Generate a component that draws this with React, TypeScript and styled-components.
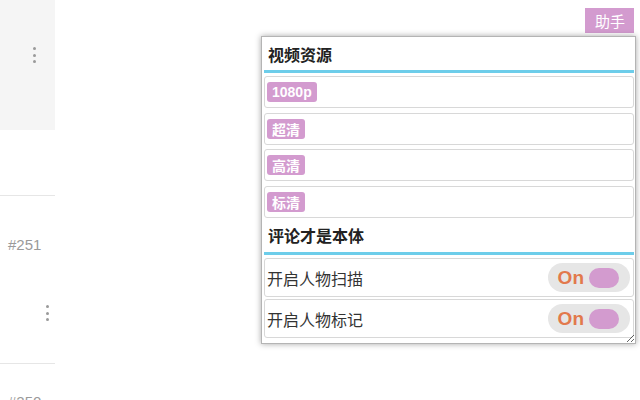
import React from 'react';
import styled, { createGlobalStyle } from 'styled-components';

const GlobalStyle = createGlobalStyle`
  html, body {
    margin: 0;
    padding: 0;
    background: #fff;
    overflow: hidden;
  }
  body {
    font-family: "Liberation Sans", "Noto Sans CJK SC", sans-serif;
  }
`;

const Page = styled.div`
  position: relative;
  width: 640px;
  height: 400px;
  overflow: hidden;
`;

/* left feed column, mostly hidden behind the page edge */
const FeedColumn = styled.div`
  width: 55px;
  display: flex;
  flex-direction: column;
`;

const FeedCard = styled.div<{ $gray?: boolean; $height: number }>`
  height: ${({ $height }) => $height}px;
  background: ${({ $gray }) => ($gray ? '#f5f5f5' : 'transparent')};
  box-sizing: border-box;
`;

const Divider = styled.div`
  height: 1px;
  background: #e6e6e6;
`;

const FloorNo = styled.div<{ $top: number }>`
  padding: ${({ $top }) => $top}px 0 0 8px;
  font-size: 15px;
  line-height: 16px;
  color: #9a9a9a;
`;

const MoreDots = styled.div<{ $left: number; $top: number }>`
  display: flex;
  flex-direction: column;
  gap: 3.5px;
  padding: ${({ $top, $left }) => `${$top}px 0 0 ${$left}px`};
  span {
    width: 3px;
    height: 3px;
    border-radius: 50%;
    background: #9a9a9a;
  }
`;

const More: React.FC<{ left: number; top: number }> = ({ left, top }) => (
  <MoreDots $left={left} $top={top}>
    <span />
    <span />
    <span />
  </MoreDots>
);

const HelperButton = styled.button`
  position: absolute;
  top: 8px;
  right: 6px;
  height: 25px;
  padding: 0 9px 0 10px;
  border: none;
  border-radius: 0;
  background: #d39bcf;
  color: #fff;
  font-family: "Noto Sans CJK SC", sans-serif;
  font-size: 15px;
  line-height: 25px;
  cursor: pointer;
`;

const Panel = styled.div`
  position: absolute;
  left: 261px;
  top: 36px;
  width: 375px;
  height: 308px;
  box-sizing: border-box;
  border: 1px solid #b4b4b4;
  background: #fff;
  box-shadow: 0 0 6px rgba(0, 0, 0, 0.35);
  padding: 0 1px 0 2px;
  resize: both;
  overflow: auto;
`;

const SectionTitle = styled.div<{ $height: number; $after: number }>`
  padding: 0 4px;
  height: ${({ $height }) => $height}px;
  display: flex;
  align-items: center;
  font-family: "Noto Sans CJK SC", sans-serif;
  font-weight: 700;
  font-size: 16px;
  color: #222;
  border-bottom: 3px solid #6dcdea;
  margin-bottom: ${({ $after }) => $after}px;
`;

const OptionList = styled.div<{ $gap: number }>`
  display: flex;
  flex-direction: column;
  gap: ${({ $gap }) => $gap}px;
`;

const OptionRow = styled.div<{ $height: number }>`
  height: ${({ $height }) => $height}px;
  box-sizing: border-box;
  border: 1px solid #d8d8d8;
  border-radius: 3px;
  display: flex;
  align-items: center;
  justify-content: space-between;
  padding: 0 3px 0 2px;
`;

const QualityTag = styled.span`
  display: inline-flex;
  align-items: center;
  height: 20px;
  padding: 0 5px;
  border-radius: 3px;
  background: #d39bcf;
  color: #fff;
  font-size: 14px;
  font-weight: 700;
  font-family: "Liberation Sans", "Noto Sans CJK SC", sans-serif;
`;

const OptionLabel = styled.span`
  font-family: "Noto Sans CJK SC", sans-serif;
  font-size: 16px;
  color: #333;
`;

const Toggle = styled.button<{ $on: boolean }>`
  display: flex;
  align-items: center;
  gap: 5px;
  height: 29px;
  padding: 0 11px 0 10px;
  border: none;
  border-radius: 15px;
  background: #e6e6e6;
  color: #e2794c;
  font-family: "Liberation Sans", sans-serif;
  font-weight: 700;
  font-size: 19px;
  cursor: pointer;
  i {
    width: 30px;
    height: 20px;
    border-radius: 10px;
    background: ${({ $on }) => ($on ? '#d39bcf' : '#bbb')};
  }
`;

const qualities = ['1080p', '超清', '高清', '标清'];
const switches = [
  { label: '开启人物扫描', on: true },
  { label: '开启人物标记', on: true },
];

export default function App() {
  return (
    <Page>
      <GlobalStyle />
      <FeedColumn>
        <FeedCard $gray $height={130}>
          <More left={33} top={47} />
        </FeedCard>
        <FeedCard $height={65} />
        <Divider />
        <FeedCard $height={167}>
          <FloorNo $top={41}>#251</FloorNo>
          <More left={46} top={52} />
        </FeedCard>
        <Divider />
        <FeedCard $height={40}>
          <FloorNo $top={30}>#250</FloorNo>
        </FeedCard>
      </FeedColumn>

      <HelperButton>助手</HelperButton>

      <Panel>
        <SectionTitle $height={33} $after={3}>视频资源</SectionTitle>
        <OptionList $gap={4.5}>
          {qualities.map((q) => (
            <OptionRow key={q} $height={32}>
              <QualityTag>{q}</QualityTag>
            </OptionRow>
          ))}
        </OptionList>
        <SectionTitle $height={34} $after={3.5}>评论才是本体</SectionTitle>
        <OptionList $gap={2}>
          {switches.map((s) => (
            <OptionRow key={s.label} $height={39}>
              <OptionLabel>{s.label}</OptionLabel>
              <Toggle $on={s.on}>
                On
                <i />
              </Toggle>
            </OptionRow>
          ))}
        </OptionList>
      </Panel>
    </Page>
  );
}
